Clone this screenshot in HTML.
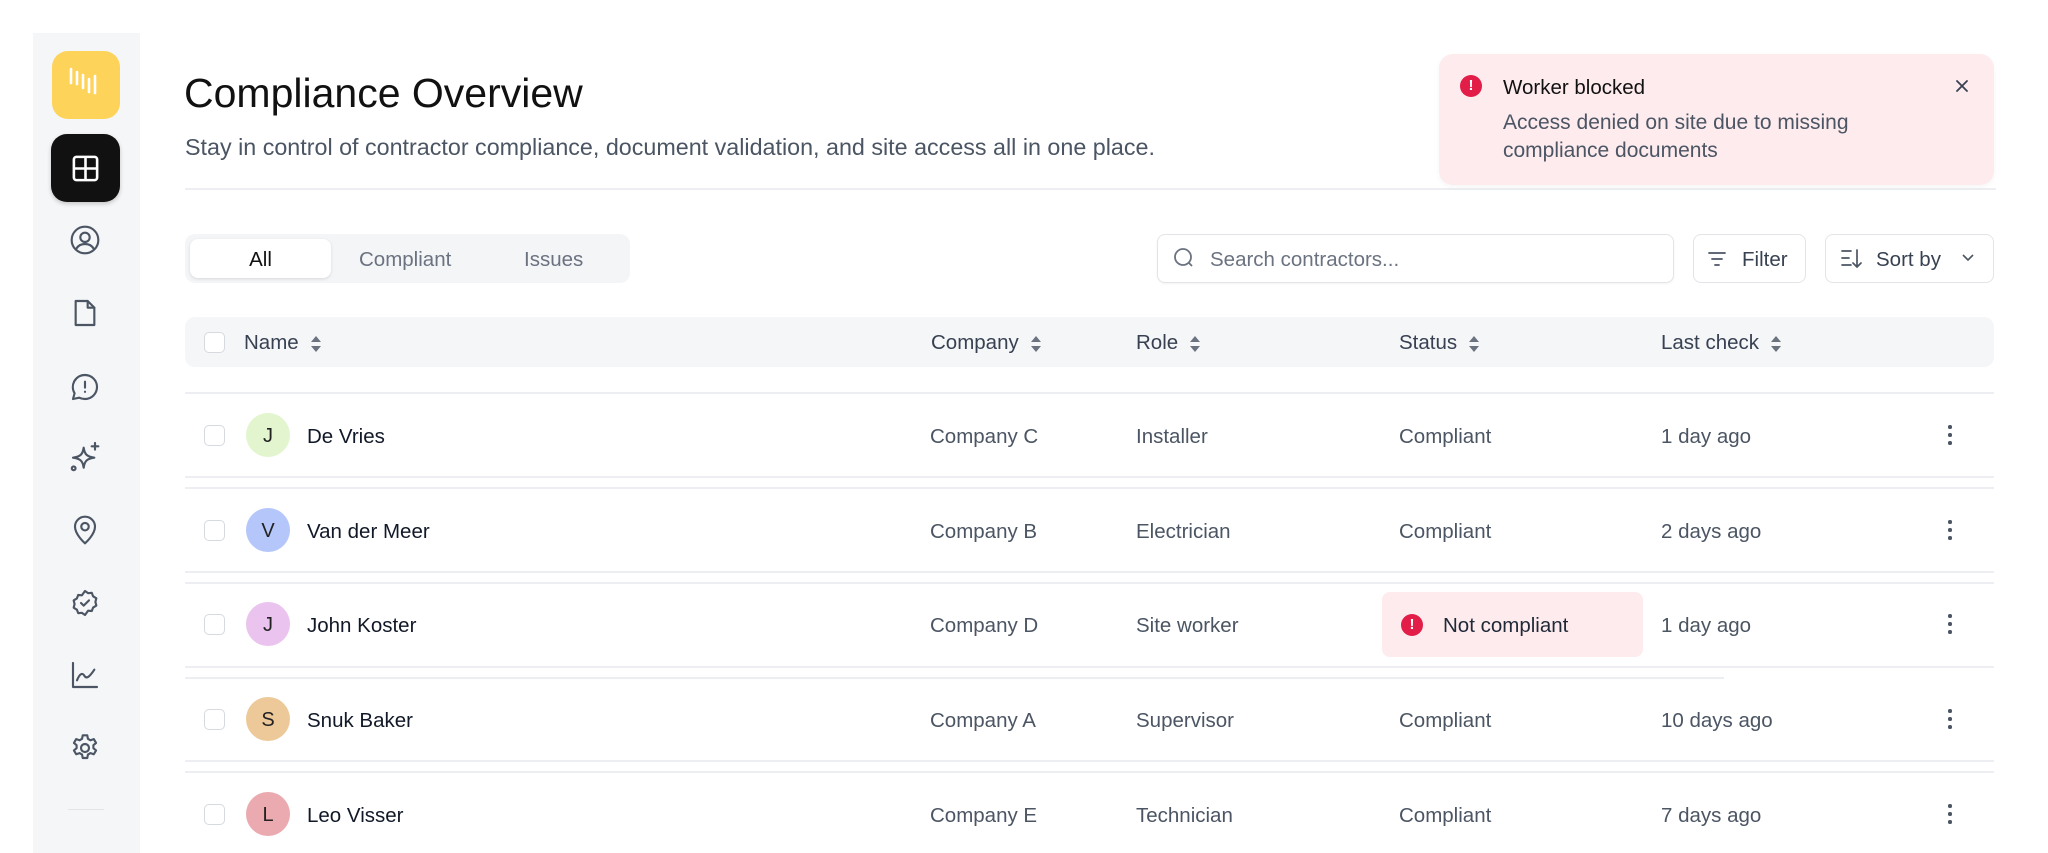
<!DOCTYPE html>
<html><head><meta charset="utf-8"><style>
*{box-sizing:border-box;margin:0;padding:0}
body{width:2048px;height:832px;background:#fff;font-family:"Liberation Sans",Arial,sans-serif;position:relative;overflow:hidden;color:#111827}
.abs{position:absolute}
.side{left:33px;top:33px;width:107px;height:820px;background:#f5f6f8}
.ic{position:absolute;left:69px;width:32px;height:32px}
.ic svg{width:32px;height:32px;fill:none;stroke:#4b5563;stroke-width:1.6;stroke-linecap:round;stroke-linejoin:round}
.line{position:absolute;height:2px;background:#eceef1}
.cb{position:absolute;width:21px;height:21px;border:1.5px solid #d6d9de;border-radius:5px;background:#fff}
.av{position:absolute;width:44px;height:44px;border-radius:50%;text-align:center;line-height:46px;font-size:20px;color:#222}
.t{position:absolute;font-size:20.5px;color:#4b5563;transform:translateY(-45%);white-space:nowrap}
.n{color:#111827}
.h{position:absolute;font-size:20.5px;color:#374151;top:343px;transform:translateY(-50%);white-space:nowrap}
.sort{display:inline-block;vertical-align:middle;margin-left:12px;width:10px;height:18px;position:relative}
.sort:before,.sort:after{content:"";position:absolute;left:0;border-left:5px solid transparent;border-right:5px solid transparent}
.sort:before{top:1px;border-bottom:6px solid #6b7280}
.sort:after{bottom:1px;border-top:6px solid #6b7280}
.keb{position:absolute;left:1948px;width:4px}
.keb i{display:block;width:3.5px;height:3.5px;border-radius:50%;background:#4b5563;margin-bottom:4.5px}
</style></head><body>
<div class="abs side"></div>
<div class="abs" style="left:52px;top:51px;width:68px;height:68px;border-radius:16px;background:#fdd35a"></div>
<svg class="abs" style="left:66px;top:66px" width="40" height="40" viewBox="0 0 40 40" stroke="#fff" stroke-width="2.6" stroke-linecap="round"><path d="M5 3v14M11 6v12M17 9v13M23 13v13M29 10v17"/></svg>
<div class="abs" style="left:51px;top:134px;width:69px;height:68px;border-radius:16px;background:#111;box-shadow:0 2px 4px rgba(0,0,0,.2)"></div>
<svg class="abs" style="left:70px;top:153px" width="31" height="31" viewBox="0 0 24 24" fill="none" stroke="#fff" stroke-width="2"><rect x="3" y="3" width="18" height="18" rx="2"/><path d="M12 3v18M3 12h18"/></svg>
<div class="ic" style="top:224px"><svg viewBox="0 0 24 24"><circle cx="12" cy="12" r="10"/><circle cx="12" cy="10" r="3.5"/><path d="M5.5 18.5c1.5-2.5 4-3.5 6.5-3.5s5 1 6.5 3.5"/></svg></div>
<div class="ic" style="top:297px"><svg viewBox="0 0 24 24"><path d="M5 3h9l5 5v13H5z"/><path d="M14 3v5h5"/></svg></div>
<div class="ic" style="top:371px"><svg viewBox="0 0 24 24"><path d="M12 3a9 9 0 0 1 0 18c-1.7 0-3-.3-4.3-1L3 21l1.2-4.3A9 9 0 0 1 12 3z"/><path d="M12 8v4.5M12 15.5v.2"/></svg></div>
<div class="ic" style="top:441px"><svg viewBox="0 0 24 24"><path d="M11 5c.7 5 2.5 6.8 8 7.5-5.5.7-7.3 2.5-8 7.5-.7-5-2.5-6.8-8-7.5 5.5-.7 7.3-2.5 8-7.5z"/><path d="M19.5 1.5v5M17 4h5"/><circle cx="3.5" cy="20.5" r="1.4"/></svg></div>
<div class="ic" style="top:514px"><svg viewBox="0 0 24 24"><path d="M12 22s-7.5-6.5-7.5-12.5a7.5 7.5 0 0 1 15 0C19.5 15.5 12 22 12 22z"/><circle cx="12" cy="9.5" r="2.8"/></svg></div>
<div class="ic" style="top:587px"><svg viewBox="0 0 24 24"><path d="M12 3l2.3 1.6 2.8-.2 1 2.6 2.4 1.5-.7 2.7.7 2.7-2.4 1.5-1 2.6-2.8-.2L12 21l-2.3-1.6-2.8.2-1-2.6-2.4-1.5.7-2.7-.7-2.7 2.4-1.5 1-2.6 2.8.2z"/><path d="M9 12l2 2 4-4"/></svg></div>
<div class="ic" style="top:659px"><svg viewBox="0 0 24 24"><path d="M3 3v18h18"/><path d="M6 16c2-5 4-6 5.5-3.5S15 14 19 8"/></svg></div>
<div class="ic" style="top:732px"><svg viewBox="0 0 24 24"><circle cx="12" cy="12" r="3"/><path d="M10.3 2.5h3.4l.5 2.6 1.9 1.1 2.5-.9 1.7 2.9-2 1.7v2.2l2 1.7-1.7 2.9-2.5-.9-1.9 1.1-.5 2.6h-3.4l-.5-2.6-1.9-1.1-2.5.9-1.7-2.9 2-1.7v-2.2l-2-1.7 1.7-2.9 2.5.9 1.9-1.1z"/></svg></div>
<div class="abs" style="left:68px;top:809px;width:36px;height:1px;background:#e2e4e8"></div>

<div class="abs" style="left:184px;top:70px;font-size:41px;color:#111">Compliance Overview</div>
<div class="abs" style="left:185px;top:134px;font-size:23.3px;color:#4b5563">Stay in control of contractor compliance, document validation, and site access all in one place.</div>
<div class="line" style="left:185px;top:188px;width:1811px;height:1.5px"></div>

<div class="abs" style="left:185px;top:234px;width:445px;height:49px;border-radius:10px;background:#f4f5f7"></div>
<div class="abs" style="left:190px;top:239px;width:141px;height:39px;border-radius:8px;background:#fff;box-shadow:0 1px 3px rgba(0,0,0,.12)"></div>
<div class="abs" style="left:190px;top:248px;width:141px;text-align:center;font-size:20.5px;color:#111">All</div>
<div class="abs" style="left:359px;top:248px;font-size:20.5px;color:#6b7280">Compliant</div>
<div class="abs" style="left:524px;top:248px;font-size:20.5px;color:#6b7280">Issues</div>

<div class="abs" style="left:1157px;top:234px;width:517px;height:49px;border:1.5px solid #e2e4e8;border-radius:8px;box-shadow:0 1px 2px rgba(0,0,0,.05)"></div>
<svg class="abs" style="left:1172px;top:246px" width="24" height="24" viewBox="0 0 24 24" fill="none" stroke="#6b7280" stroke-width="1.8"><circle cx="11" cy="11" r="8"/><path d="M17 17l3 3"/></svg>
<div class="abs" style="left:1210px;top:248px;font-size:20.5px;color:#6b7280">Search contractors...</div>
<div class="abs" style="left:1693px;top:234px;width:113px;height:49px;border:1.5px solid #e2e4e8;border-radius:8px"></div>
<svg class="abs" style="left:1707px;top:249px" width="20" height="20" viewBox="0 0 20 20" stroke="#4b5563" stroke-width="1.8" stroke-linecap="round"><path d="M2 4h16M5 10h10M8 16h4"/></svg>
<div class="abs" style="left:1742px;top:248px;font-size:20.5px;color:#374151">Filter</div>
<div class="abs" style="left:1825px;top:234px;width:169px;height:49px;border:1.5px solid #e2e4e8;border-radius:8px"></div>
<svg class="abs" style="left:1839px;top:247px" width="24" height="24" viewBox="0 0 24 24" fill="none" stroke="#4b5563" stroke-width="1.7" stroke-linecap="round"><path d="M3 4h9M3 11h7M3 18h9M18 3v17M14 16l4 4 4-4"/></svg>
<div class="abs" style="left:1876px;top:248px;font-size:20.5px;color:#374151">Sort by</div>
<svg class="abs" style="left:1961px;top:253px" width="14" height="10" viewBox="0 0 14 10" fill="none" stroke="#4b5563" stroke-width="1.6"><path d="M2 2l5 5 5-5"/></svg>

<div class="abs" style="left:1439px;top:54px;width:555px;height:131px;border-radius:14px;background:#fdebee;box-shadow:0 2px 6px rgba(0,0,0,.04)"></div>
<div class="abs" style="left:1460px;top:75px;width:22px;height:22px;border-radius:50%;background:#e11d48;color:#fff;font-weight:bold;font-size:15px;text-align:center;line-height:22px">!</div>
<div class="abs" style="left:1503px;top:76px;font-size:20.5px;color:#111">Worker blocked</div>
<div class="abs" style="left:1503px;top:109px;font-size:21px;color:#4b5563;line-height:28px">Access denied on site due to missing<br>compliance documents</div>
<svg class="abs" style="left:1954px;top:78px" width="16" height="16" viewBox="0 0 16 16" stroke="#374151" stroke-width="1.8" stroke-linecap="round"><path d="M3 3l10 10M13 3L3 13"/></svg>

<div class="abs" style="left:185px;top:317px;width:1809px;height:50px;border-radius:10px;background:#f5f6f8"></div>
<div class="cb" style="left:204px;top:332px"></div>
<div class="h" style="left:244px">Name<span class="sort"></span></div>
<div class="h" style="left:931px">Company<span class="sort"></span></div>
<div class="h" style="left:1136px">Role<span class="sort"></span></div>
<div class="h" style="left:1399px">Status<span class="sort"></span></div>
<div class="h" style="left:1661px">Last check<span class="sort"></span></div>

<div class="line" style="left:185px;top:392px;width:1809px"></div>
<div class="line" style="left:185px;top:476px;width:1809px"></div>
<div class="line" style="left:185px;top:487px;width:1809px"></div>
<div class="line" style="left:185px;top:571px;width:1809px"></div>
<div class="line" style="left:185px;top:582px;width:1809px"></div>
<div class="line" style="left:185px;top:666px;width:1809px"></div>
<div class="line" style="left:185px;top:677px;width:1539px"></div>
<div class="line" style="left:185px;top:760px;width:1809px"></div>
<div class="line" style="left:185px;top:771px;width:1809px"></div>

<div class="cb" style="left:204px;top:425px"></div>
<div class="av" style="left:246px;top:413px;background:#e3f5cf">J</div>
<div class="t n" style="left:307px;top:436px">De Vries</div>
<div class="t" style="left:930px;top:436px">Company C</div>
<div class="t" style="left:1136px;top:436px">Installer</div>
<div class="t" style="left:1399px;top:436px">Compliant</div>
<div class="t" style="left:1661px;top:436px">1 day ago</div>
<div class="keb" style="top:425px"><i></i><i></i><i></i></div>

<div class="cb" style="left:204px;top:520px"></div>
<div class="av" style="left:246px;top:508px;background:#b5c6fb">V</div>
<div class="t n" style="left:307px;top:531px">Van der Meer</div>
<div class="t" style="left:930px;top:531px">Company B</div>
<div class="t" style="left:1136px;top:531px">Electrician</div>
<div class="t" style="left:1399px;top:531px">Compliant</div>
<div class="t" style="left:1661px;top:531px">2 days ago</div>
<div class="keb" style="top:520px"><i></i><i></i><i></i></div>

<div class="cb" style="left:204px;top:614px"></div>
<div class="av" style="left:246px;top:602px;background:#eac3ee">J</div>
<div class="t n" style="left:307px;top:625px">John Koster</div>
<div class="t" style="left:930px;top:625px">Company D</div>
<div class="t" style="left:1136px;top:625px">Site worker</div>
<div class="abs" style="left:1382px;top:592px;width:261px;height:65px;border-radius:8px;background:#fdebee"></div>
<div class="abs" style="left:1401px;top:614px;width:22px;height:22px;border-radius:50%;background:#e11d48;color:#fff;font-weight:bold;font-size:15px;text-align:center;line-height:22px">!</div>
<div class="t n" style="left:1443px;top:625px;color:#1f2937">Not compliant</div>
<div class="t" style="left:1661px;top:625px">1 day ago</div>
<div class="keb" style="top:614px"><i></i><i></i><i></i></div>

<div class="cb" style="left:204px;top:709px"></div>
<div class="av" style="left:246px;top:697px;background:#edc99a">S</div>
<div class="t n" style="left:307px;top:720px">Snuk Baker</div>
<div class="t" style="left:930px;top:720px">Company A</div>
<div class="t" style="left:1136px;top:720px">Supervisor</div>
<div class="t" style="left:1399px;top:720px">Compliant</div>
<div class="t" style="left:1661px;top:720px">10 days ago</div>
<div class="keb" style="top:709px"><i></i><i></i><i></i></div>

<div class="cb" style="left:204px;top:804px"></div>
<div class="av" style="left:246px;top:792px;background:#eaaab0">L</div>
<div class="t n" style="left:307px;top:815px">Leo Visser</div>
<div class="t" style="left:930px;top:815px">Company E</div>
<div class="t" style="left:1136px;top:815px">Technician</div>
<div class="t" style="left:1399px;top:815px">Compliant</div>
<div class="t" style="left:1661px;top:815px">7 days ago</div>
<div class="keb" style="top:804px"><i></i><i></i><i></i></div>
</body></html>
